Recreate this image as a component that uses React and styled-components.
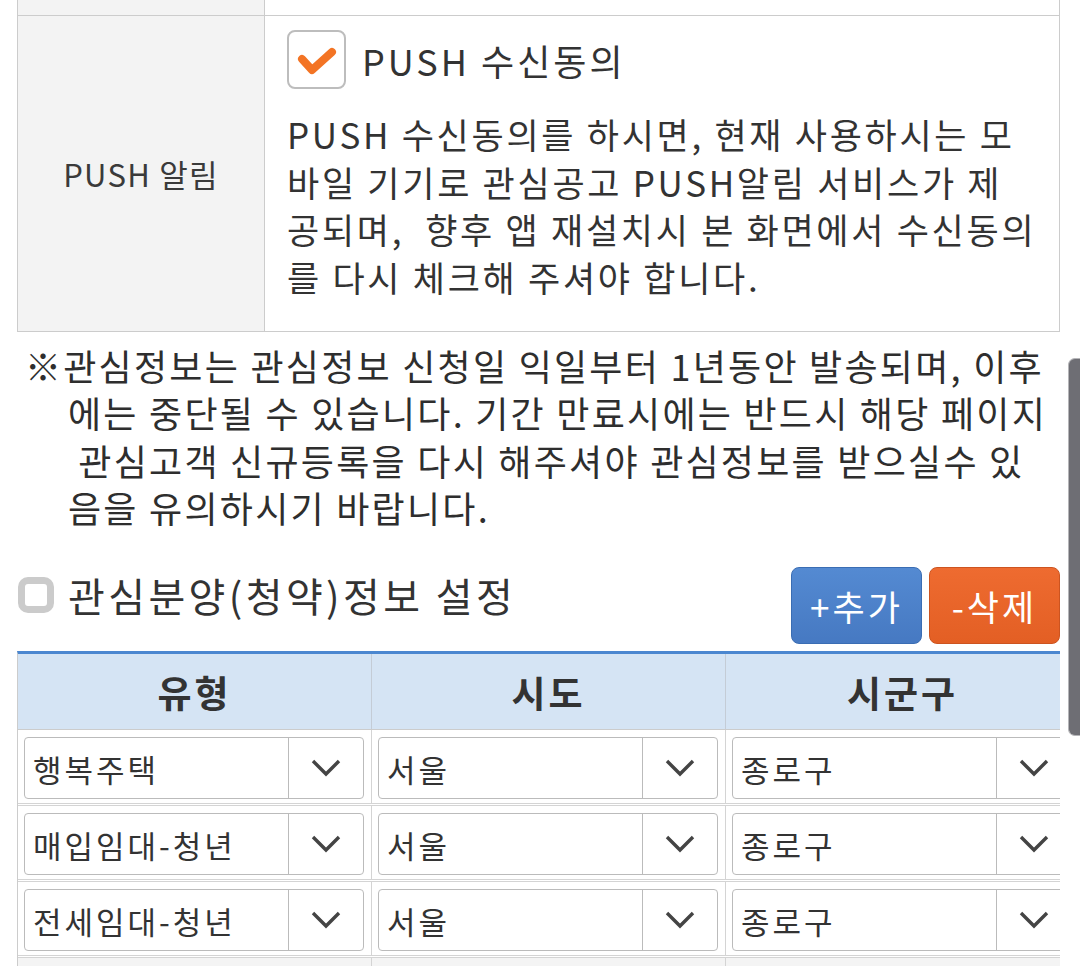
import React from "react"
import styled, { createGlobalStyle } from "styled-components"

const GlobalStyle = createGlobalStyle`
  body {
    margin: 0;
    background: #fff;
    color: #333;
    font-family: "Noto Sans CJK KR", "Noto Sans", sans-serif;
    letter-spacing: 0.08em;
  }
  * { box-sizing: border-box; }
`

const Page = styled.div`
  width: 1080px;
  height: 966px;
  padding: 0 20px 0 17px;
  overflow: hidden;
`

const InfoTable = styled.div`
  border-left: 1px solid #ccc;
  border-right: 1px solid #ccc;
`

const InfoRow = styled.div`
  display: grid;
  grid-template-columns: 247px 1fr;
  min-height: ${(p) => p.$height}px;
  border-bottom: 1px solid #ccc;
`

const LabelCell = styled.div`
  background: #f3f3f3;
  border-right: 1px solid #ccc;
  display: flex;
  align-items: center;
  justify-content: center;
  font-size: 31px;
  color: #3a3a3a;
`

const ValueCell = styled.div`
  padding: 14px 0 28px 22px;
  white-space: nowrap;
`

const CheckRow = styled.div`
  display: flex;
  align-items: center;
  gap: 16px;
`

const CheckBox = styled.div`
  width: 59px;
  height: 59px;
  border: 2px solid #bdbdbd;
  border-radius: 8px;
  background: #fff;
  display: flex;
  align-items: center;
  justify-content: center;
`

const CheckLabel = styled.span`
  font-size: 36px;
  letter-spacing: 3px;
`

const Desc = styled.p`
  margin: 21px 0 0;
  font-size: 35px;
  line-height: 47.5px;
  letter-spacing: 2.7px;
`

const Notice = styled.p`
  margin: 10px 0 0 8px;
  padding-left: 43px;
  text-indent: -43px;
  font-size: 36px;
  line-height: 47.3px;
  letter-spacing: 2.25px;
  white-space: nowrap;
  color: #2e2e2e;
`

const SectionHead = styled.div`
  display: flex;
  justify-content: space-between;
  margin-top: 36px;
  margin-bottom: 7px;
`

const SectionTitle = styled.h2`
  display: flex;
  align-items: center;
  gap: 14px;
  height: 50px;
  margin: 3px 0 0 1px;
  font-size: 40px;
  font-weight: 400;
  letter-spacing: 3.4px;
`

const GrayBox = styled.span`
  width: 36px;
  height: 36px;
  border: 7px solid #cbcbcb;
  border-radius: 10px;
`

const Buttons = styled.div`
  display: flex;
  gap: 7px;
`

const ActionButton = styled.button`
  width: 131px;
  height: 77px;
  border-radius: 8px;
  border: 1px solid ${(p) => (p.$variant === "add" ? "#3a6db3" : "#cc5420")};
  background: ${(p) =>
    p.$variant === "add"
      ? "linear-gradient(#548ad2, #4679c2)"
      : "linear-gradient(#ee6b30, #e35f24)"};
  color: #fff;
  font-family: inherit;
  font-size: 35px;
  letter-spacing: 3px;
  padding: 0;
`

const TableClip = styled.div`
  overflow: hidden;
`

const GridTable = styled.div`
  width: 1062px;
  border-top: 3px solid #4b87d0;
  border-left: 1px solid #ccc;
`

const HeadRow = styled.div`
  display: grid;
  grid-template-columns: repeat(3, 354px);
  height: 76px;
  background: #d5e4f4;
  border-bottom: 1px solid #ccc;
`

const HeadCell = styled.div`
  display: flex;
  align-items: center;
  justify-content: center;
  border-right: 1px solid #c4ccd6;
  font-size: 37px;
  font-weight: 700;
  letter-spacing: 3px;
`

const BodyRow = styled.div`
  display: grid;
  grid-template-columns: repeat(3, 354px);
  height: 76px;
  border-bottom: 3px double #d4d4d4;
  background: ${(p) => (p.$muted ? "#f4f4f4" : "#fff")};
`

const BodyCell = styled.div`
  border-right: 1px solid #d4d4d4;
  padding: 7px 7px 4px 6px;
`

const SelectBox = styled.div`
  display: flex;
  height: 62px;
  border: 1px solid #bbb;
  border-radius: 4px;
  background: #fff;
`

const SelectText = styled.span`
  flex: 1;
  display: flex;
  align-items: center;
  padding-left: 8px;
  font-size: 31px;
  letter-spacing: 3px;
  color: #333;
`

const SelectArrow = styled.span`
  width: 75px;
  border-left: 1px solid #bbb;
  display: flex;
  align-items: center;
  justify-content: center;
`

const Scrollbar = styled.div`
  position: fixed;
  top: 358px;
  right: 0;
  width: 12px;
  height: 378px;
  background: #6e6e74;
  border: 1px solid #b5b5b8;
  border-right: none;
  border-radius: 7px 0 0 7px;
`

const Chevron = () => (
  <svg width="30" height="18" viewBox="0 0 30 18">
    <polyline
      points="2,2 15,15 28,2"
      fill="none"
      stroke="#444"
      strokeWidth="3.4"
    />
  </svg>
)

const rows = [
  ["행복주택", "서울", "종로구"],
  ["매입임대-청년", "서울", "종로구"],
  ["전세임대-청년", "서울", "종로구"],
]

const App = () => {
  return (
    <Page>
      <GlobalStyle />
      <InfoTable>
        <InfoRow $height={16}>
          <LabelCell />
          <div />
        </InfoRow>
        <InfoRow $height={316}>
          <LabelCell>PUSH 알림</LabelCell>
          <ValueCell>
            <CheckRow>
              <CheckBox>
                <svg width="40" height="30" viewBox="0 0 40 30">
                  <polyline
                    points="5,14 15,25 35,7"
                    fill="none"
                    stroke="#f37424"
                    strokeWidth="8"
                    strokeLinecap="round"
                    strokeLinejoin="round"
                  />
                </svg>
              </CheckBox>
              <CheckLabel>PUSH 수신동의</CheckLabel>
            </CheckRow>
            <Desc>
              PUSH 수신동의를 하시면, 현재 사용하시는 모<br />
              바일 기기로 관심공고 PUSH알림 서비스가 제<br />
              공되며,&nbsp; 향후 앱 재설치시 본 화면에서 수신동의<br />
              를 다시 체크해 주셔야 합니다.
            </Desc>
          </ValueCell>
        </InfoRow>
      </InfoTable>

      <Notice>
        ※관심정보는 관심정보 신청일 익일부터 1년동안 발송되며, 이후<br />
        에는 중단될 수 있습니다. 기간 만료시에는 반드시 해당 페이지<br />
        {"\u00a0"}관심고객 신규등록을 다시 해주셔야 관심정보를 받으실수 있<br />
        음을 유의하시기 바랍니다.
      </Notice>

      <SectionHead>
        <SectionTitle>
          <GrayBox />
          관심분양(청약)정보 설정
        </SectionTitle>
        <Buttons>
          <ActionButton $variant="add">+추가</ActionButton>
          <ActionButton $variant="del">-삭제</ActionButton>
        </Buttons>
      </SectionHead>

      <TableClip>
        <GridTable>
          <HeadRow>
            <HeadCell>유형</HeadCell>
            <HeadCell>시도</HeadCell>
            <HeadCell>시군구</HeadCell>
          </HeadRow>
          {rows.map((row) => (
            <BodyRow key={row[0]}>
              {row.map((value, i) => (
                <BodyCell key={i}>
                  <SelectBox>
                    <SelectText>{value}</SelectText>
                    <SelectArrow>
                      <Chevron />
                    </SelectArrow>
                  </SelectBox>
                </BodyCell>
              ))}
            </BodyRow>
          ))}
          <BodyRow $muted>
            <BodyCell />
            <BodyCell />
            <BodyCell />
          </BodyRow>
        </GridTable>
      </TableClip>
      <Scrollbar />
    </Page>
  )
}

export default App
